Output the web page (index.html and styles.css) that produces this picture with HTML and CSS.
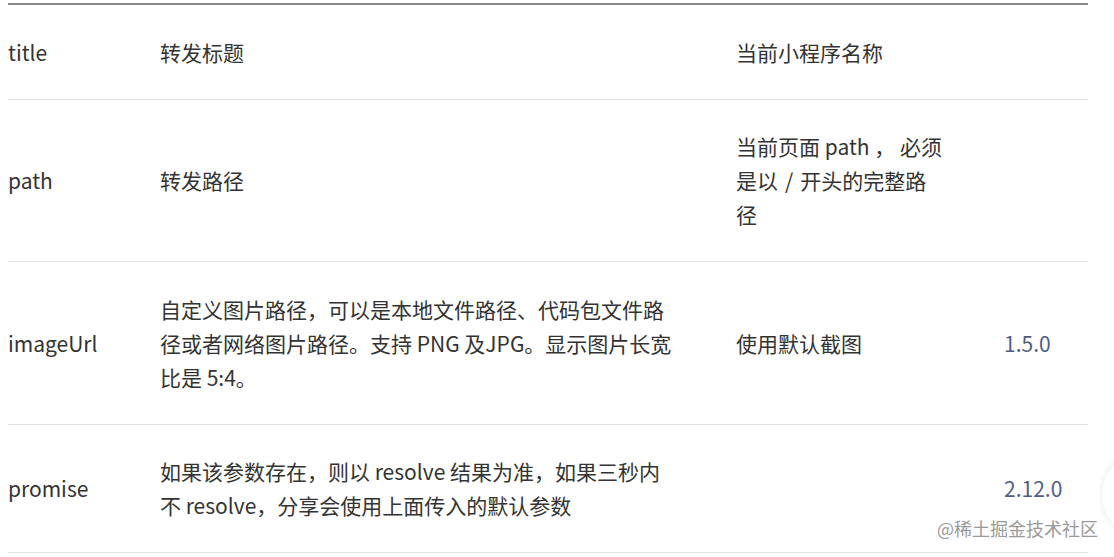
FILE: index.html
```html
<!DOCTYPE html>
<html lang="zh-CN">
<head>
    <meta charset="UTF-8">
    <meta name="viewport" content="width=device-width, initial-scale=1.0">
    <title>onShareAppMessage 参数</title>
    <link rel="stylesheet" href="styles.css">
</head>
<body>
    <div class="page">
        <table class="params">
            <colgroup>
                <col class="c-name">
                <col class="c-desc">
                <col class="c-default">
                <col class="c-ver">
            </colgroup>
            <tbody>
                <tr>
                    <td>title</td>
                    <td>转发标题</td>
                    <td>当前小程序名称</td>
                    <td class="ver"></td>
                </tr>
                <tr>
                    <td>path</td>
                    <td>转发路径</td>
                    <td>当前页面 path ， 必须是以&#8196;/&#8196;开头的完整路径</td>
                    <td class="ver"></td>
                </tr>
                <tr>
                    <td>imageUrl</td>
                    <td>自定义图片路径，可以是本地文件路径、代码包文件路径或者网络图片路径。支持 PNG 及JPG。显示图片长宽比是 5:4。</td>
                    <td>使用默认截图</td>
                    <td class="ver">1.5.0</td>
                </tr>
                <tr>
                    <td>promise</td>
                    <td>如果该参数存在，则以 resolve 结果为准，如果三秒内不 resolve，分享会使用上面传入的默认参数</td>
                    <td></td>
                    <td class="ver">2.12.0</td>
                </tr>
            </tbody>
        </table>
    </div>

    <div class="edge">
        <div class="float-btn"></div>
    </div>
    <div class="watermark">@稀土掘金技术社区</div>
</body>
</html>
```

FILE: styles.css
```css
html, body {
    margin: 0;
    background: #fff;
    overflow: hidden;
}

body {
    font-family: "Noto Sans CJK SC", "Noto Sans", sans-serif;
    font-size: 21px;
    color: #333;
}

.page {
    padding: 3px 26px 0 8px;
}

.params {
    width: 1080px;
    border-collapse: collapse;
    table-layout: fixed;
    border-top: 2px solid #8a8a8a;
}

.c-name { width: 152px; }
.c-desc { width: 576px; }
.c-default { width: 268px; }
.c-ver { width: 84px; }

.params td {
    padding: 29.5px 0 30px;
    line-height: 34px;
    vertical-align: middle;
    border-bottom: 1px solid #e2e2e2;
}

.params td:nth-child(2) { padding-right: 56px; }
.params td:nth-child(3) { padding-right: 61px; }

.params td.ver {
    color: #4f5d86;
}

/* half-hidden floating button on the right edge */
.edge {
    position: absolute;
    left: 1100px;
    top: 450px;
    width: 14px;
    height: 90px;
    overflow: hidden;
}

.float-btn {
    margin: 6px 0 0 2px;
    width: 70px;
    height: 78px;
    border-radius: 50%;
    background: #fff;
    box-shadow: 0 0 8px rgba(0, 0, 0, 0.09);
}

.watermark {
    position: absolute;
    left: 937px;
    top: 515px;
    font-size: 18px;
    line-height: 26px;
    color: #9a9a9a;
    text-shadow: 0 0 2px #fff;
}
```
